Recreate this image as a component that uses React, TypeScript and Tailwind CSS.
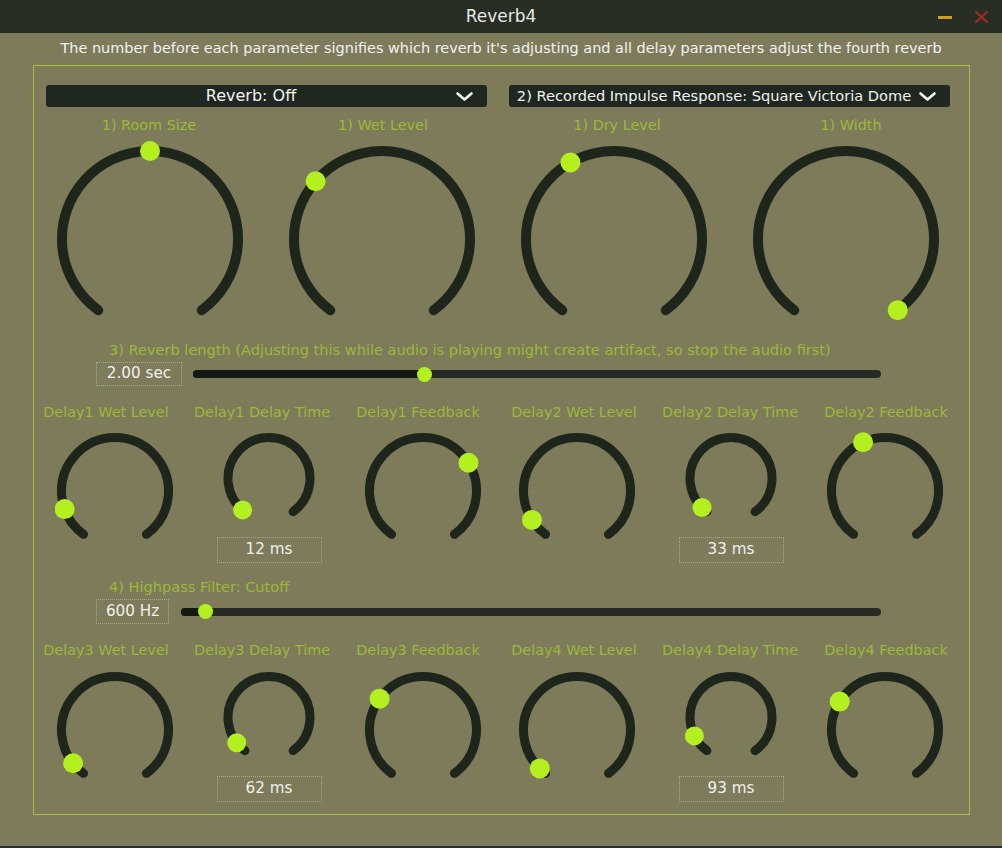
import React from "react";

const ARC = "#1e261c";
const THUMB = "#b4f01f";

function Knob({
  w,
  h,
  cx,
  cy,
  r,
  sw,
  tr,
  v,
}: {
  w: number;
  h: number;
  cx: number;
  cy: number;
  r: number;
  sw: number;
  tr: number;
  v: number;
}) {
  const a0 = (-144 * Math.PI) / 180;
  const a1 = (144 * Math.PI) / 180;
  const pt = (a: number) => [cx + r * Math.sin(a), cy - r * Math.cos(a)];
  const [sx, sy] = pt(a0);
  const [ex, ey] = pt(a1);
  const [tx, ty] = pt(a0 + v * (a1 - a0));
  return (
    <svg width={w} height={h} viewBox={`0 0 ${w} ${h}`}>
      <path
        d={`M${sx} ${sy} A${r} ${r} 0 1 1 ${ex} ${ey}`}
        fill="none"
        stroke={ARC}
        strokeWidth={sw}
        strokeLinecap="round"
      />
      <circle cx={tx} cy={ty} r={tr} fill={THUMB} />
    </svg>
  );
}

function Chevron() {
  return (
    <svg width="17" height="9" viewBox="0 0 17 9" className="mr-[14px] shrink-0">
      <path d="M1.5 1.5 L8.5 7.5 L15.5 1.5" fill="none" stroke="#f2f2f2" strokeWidth="2.6" strokeLinecap="round" strokeLinejoin="round" />
    </svg>
  );
}

function Slider({ width, pos }: { width: number; pos: number }) {
  return (
    <div className="relative h-[16px] flex items-center" style={{ width }}>
      <div className="h-[8px] w-full rounded-full bg-[#262c25] flex">
        <div className="h-full rounded-full bg-[#141813]" style={{ width: pos }} />
      </div>
      <div
        className="absolute top-[0.5px] h-[15px] w-[15px] rounded-full bg-[#b4f01f]"
        style={{ left: pos - 7.5 }}
      />
    </div>
  );
}

function Box({ text, w, h }: { text: string; w: number; h: number }) {
  return (
    <div
      className="flex items-center justify-center border border-dotted border-[#a8a898] text-[15.2px] text-[#f0f0f0] leading-none"
      style={{ width: w, height: h }}
    >
      {text}
    </div>
  );
}

type DK = { label: string; kind: "wet" | "time"; v: number; ms?: string };

function DelayRow({ items, labelGap }: { items: DK[]; labelGap: number }) {
  return (
    <>
      <div className="ml-[-6px] grid grid-cols-[repeat(6,156px)] text-[14.4px] leading-[18px] text-[#9cb938] mt-[17px]">
        {items.map((it) => (
          <div key={it.label} className="text-center whitespace-nowrap">
            {it.label}
          </div>
        ))}
      </div>
      <div className="ml-[4px] grid grid-cols-[repeat(6,154px)]" style={{ marginTop: labelGap }}>
        {items.map((it) => (
          <div key={it.label} className="flex flex-col items-center">
            {it.kind === "wet" ? (
              <Knob w={120} h={120} cx={60} cy={60} r={53.5} sw={9} tr={10} v={it.v} />
            ) : (
              <>
                <Knob w={120} h={100} cx={60} cy={47.5} r={41} sw={9} tr={9.5} v={it.v} />
                <div className="mt-[6px]">
                  <Box text={it.ms || ""} w={105} h={26} />
                </div>
              </>
            )}
          </div>
        ))}
      </div>
    </>
  );
}

export default function App() {
  const row1: DK[] = [
    { label: "Delay1 Wet Level", kind: "wet", v: 0.119 },
    { label: "Delay1 Delay Time", kind: "time", v: 0.014, ms: "12 ms" },
    { label: "Delay1 Feedback", kind: "wet", v: 0.702 },
    { label: "Delay2 Wet Level", kind: "wet", v: 0.074 },
    { label: "Delay2 Delay Time", kind: "time", v: 0.031, ms: "33 ms" },
    { label: "Delay2 Feedback", kind: "wet", v: 0.416 },
  ];
  const row2: DK[] = [
    { label: "Delay3 Wet Level", kind: "wet", v: 0.054 },
    { label: "Delay3 Delay Time", kind: "time", v: 0.055, ms: "62 ms" },
    { label: "Delay3 Feedback", kind: "wet", v: 0.312 },
    { label: "Delay4 Wet Level", kind: "wet", v: 0.028 },
    { label: "Delay4 Delay Time", kind: "time", v: 0.095, ms: "93 ms" },
    { label: "Delay4 Feedback", kind: "wet", v: 0.299 },
  ];
  const big = [
    { label: "1) Room Size", v: 0.5 },
    { label: "1) Wet Level", v: 0.33 },
    { label: "1) Dry Level", v: 0.397 },
    { label: "1) Width", v: 1 },
  ];
  return (
    <div className="w-[1002px] h-[848px] bg-[#7d7b5a] font-['DejaVu_Sans',sans-serif] flex flex-col overflow-hidden border-b-2 border-[#2a2f3a]">
      {/* title bar */}
      <div className="h-[33px] shrink-0 bg-[#272e23] grid grid-cols-[1fr_auto_1fr] items-center">
        <div />
        <div className="text-[17px] text-[#e8e8e8] leading-none">Reverb4</div>
        <div className="flex items-center justify-end pr-[13px] gap-[22px]">
          <div className="h-[3px] w-[14px] bg-[#c9a021] mt-[1px]" />
          <svg width="15" height="12" viewBox="0 0 15 12">
            <path d="M2 1 L13 11 M13 1 L2 11" stroke="#a62a22" strokeWidth="2" strokeLinecap="round" />
          </svg>
        </div>
      </div>
      {/* subtitle */}
      <div className="h-[32px] shrink-0 flex items-center justify-center text-[14.45px] text-[#f2f2f2] whitespace-nowrap">
        The number before each parameter signifies which reverb it's adjusting and all delay parameters adjust the fourth reverb
      </div>
      {/* panel */}
      <div className="ml-[33px] w-[937px] h-[750px] shrink-0 border border-[#a6c23b] flex flex-col pt-[19px]">
        {/* dropdowns */}
        <div className="flex pl-[12px] gap-[22px]">
          <div className="w-[441px] h-[22px] rounded-[3px] bg-[#1e2820] flex items-center">
            <div className="flex-1 text-center text-[16px] text-[#f2f2f2] leading-none whitespace-nowrap">Reverb: Off</div>
            <Chevron />
          </div>
          <div className="w-[441px] h-[22px] rounded-[3px] bg-[#1e2820] flex items-center">
            <div className="flex-1 text-center text-[14.6px] text-[#f2f2f2] leading-none whitespace-nowrap">
              2) Recorded Impulse Response: Square Victoria Dome
            </div>
            <Chevron />
          </div>
        </div>
        {/* big labels */}
        <div className="ml-[-2px] mt-[9px] grid grid-cols-[repeat(4,234px)] text-[14.4px] leading-[18px] text-[#9cb938]">
          {big.map((b) => (
            <div key={b.label} className="text-center whitespace-nowrap">
              {b.label}
            </div>
          ))}
        </div>
        {/* big knobs */}
        <div className="mt-[5px] grid grid-cols-[repeat(4,232px)]">
          {big.map((b) => (
            <div key={b.label} className="flex justify-center">
              <Knob w={200} h={200} cx={100} cy={100} r={88} sw={10} tr={10} v={b.v} />
            </div>
          ))}
        </div>
        {/* reverb length */}
        <div className="mt-[2px] pl-[75px] text-[14.55px] leading-[18px] text-[#9cb938] whitespace-nowrap">
          3) Reverb length (Adjusting this while audio is playing might create artifact, so stop the audio first)
        </div>
        <div className="mt-[3px] flex items-center pl-[62px]">
          <Box text="2.00 sec" w={86} h={24} />
          <div className="ml-[11px]">
            <Slider width={688} pos={231} />
          </div>
        </div>
        <DelayRow items={row1} labelGap={10} />
        {/* highpass */}
        <div className="mt-[15px] pl-[75px] text-[14.55px] leading-[18px] text-[#9cb938] whitespace-nowrap">
          4) Highpass Filter: Cutoff
        </div>
        <div className="mt-[3px] flex items-center pl-[62px]">
          <Box text="600 Hz" w={73} h={25} />
          <div className="ml-[12px]">
            <Slider width={700} pos={24} />
          </div>
        </div>
        <DelayRow items={row2} labelGap={11} />
      </div>
    </div>
  );
}
